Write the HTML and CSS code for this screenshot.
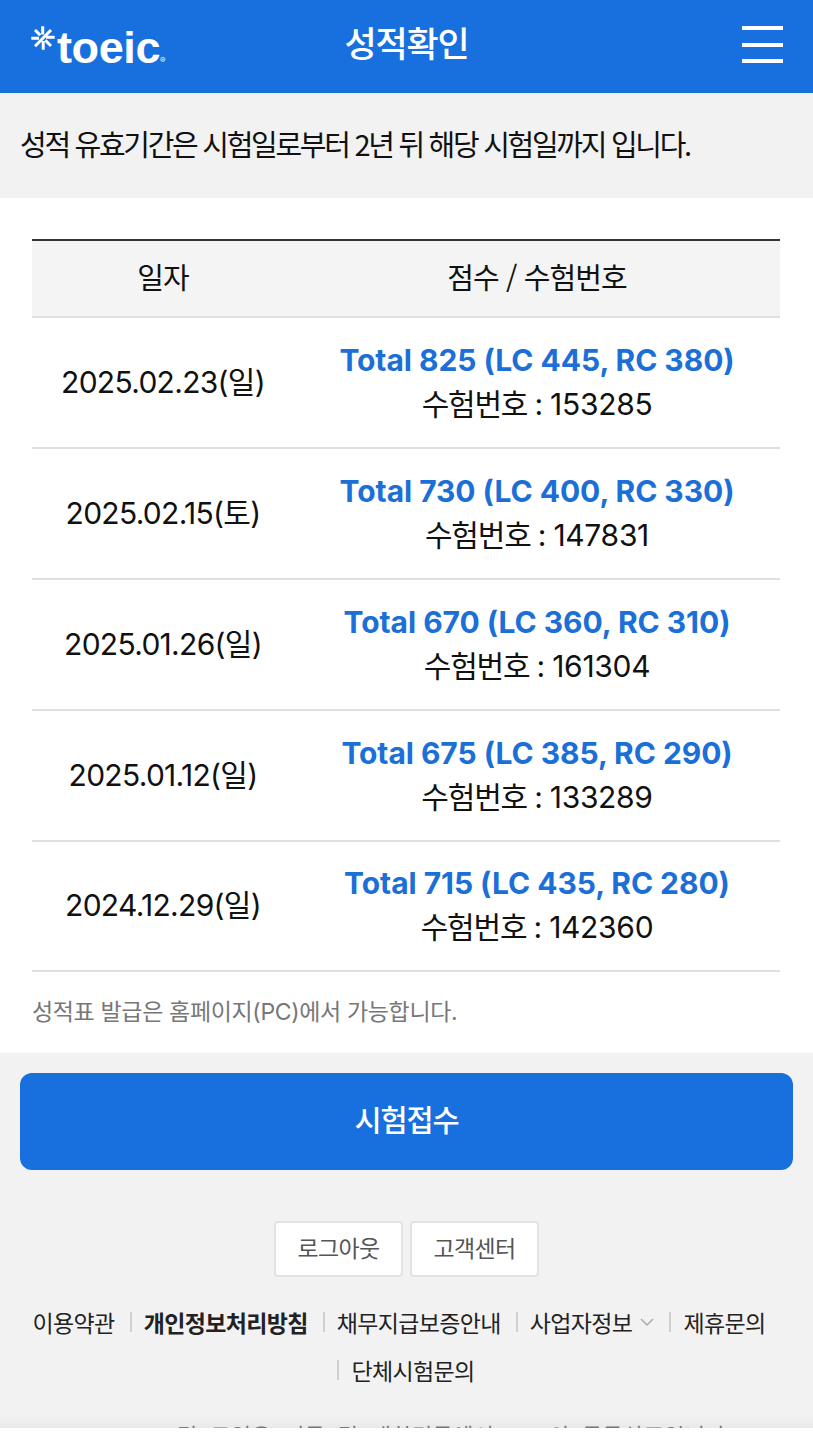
FILE: index.html
```html
<!DOCTYPE html>
<html lang="ko">
<head>
<meta charset="utf-8">
<title>성적확인</title>
<link rel="stylesheet" href="styles.css">
</head>
<body>
<div class="page">
  <header class="header">
    <div class="logo">
      <svg class="logo-star" viewBox="0 0 24 24" width="24" height="24"><path d="M11.7 0.3V8.5M0.3 12.3H8M12.2 15V23.7M15 11.2H23.7M4 4L9.3 9.3M4 20.3L20 4M14.3 14.3L20 20" fill="none" stroke="currentColor" stroke-width="3"/></svg>
      <span class="logo-text">toeic</span><span class="logo-mark">®</span>
    </div>
    <h1 class="title">성적확인</h1>
    <button class="menu" aria-label="메뉴"><i></i><i></i><i></i></button>
  </header>
  <p class="notice">성적 유효기간은 시험일로부터 2년 뒤 해당 시험일까지 입니다.</p>
  <main class="results">
    <table class="scores">
      <thead><tr><th class="col-date">일자</th><th>점수 / 수험번호</th></tr></thead>
      <tbody>
        <tr><td class="date">2025.02.23(일)</td><td><strong>Total 825 (LC 445, RC 380)</strong><div><span class="label">수험번호 :</span> 153285</div></td></tr>
        <tr><td class="date">2025.02.15(토)</td><td><strong>Total 730 (LC 400, RC 330)</strong><div><span class="label">수험번호 :</span> 147831</div></td></tr>
        <tr><td class="date">2025.01.26(일)</td><td><strong>Total 670 (LC 360, RC 310)</strong><div><span class="label">수험번호 :</span> 161304</div></td></tr>
        <tr><td class="date">2025.01.12(일)</td><td><strong>Total 675 (LC 385, RC 290)</strong><div><span class="label">수험번호 :</span> 133289</div></td></tr>
        <tr><td class="date">2024.12.29(일)</td><td><strong>Total 715 (LC 435, RC 280)</strong><div><span class="label">수험번호 :</span> 142360</div></td></tr>
      </tbody>
    </table>
    <p class="hint">성적표 발급은 홈페이지(PC)에서 가능합니다.</p>
  </main>
  <footer class="footer">
    <a class="apply">시험접수</a>
    <div class="actions"><a class="action">로그아웃</a><a class="action">고객센터</a></div>
    <nav class="links">
      <a class="link">이용약관</a>
      <a class="link bold">개인정보처리방침</a>
      <a class="link">채무지급보증안내</a>
      <a class="link">사업자정보<svg class="chevron" viewBox="0 0 14 9" width="14" height="9"><path d="M1 1L7 7L13 1" fill="none" stroke="currentColor" stroke-width="1.5"/></svg></a>
      <a class="link">제휴문의</a>
    </nav>
    <nav class="links second"><a class="link divided">단체시험문의</a></nav>
    <p class="company">ETS, TOEIC 및 토익은 미국 및 대한민국에서 ETS의 등록상표입니다.</p>
  </footer>
</div>
</body>
</html>
```
FILE: styles.css
```css
* { box-sizing: border-box; }
body {
  margin: 0;
  background: #fff;
  color: #111;
  font-family: Inter, "Noto Sans CJK KR", sans-serif;
  font-size: 30px;
}
p, h1 { margin: 0; }
.page { width: 813px; height: 1440px; overflow: hidden; }
.header {
  display: grid;
  grid-template-columns: 1fr auto 1fr;
  align-items: center;
  height: 93px;
  padding: 0 30px;
  background: #1870df;
  color: #fff;
}
.logo { display: flex; align-items: flex-start; height: 48px; }
.logo-star { margin: 3px 0 0 1px; }
.logo-text {
  margin-left: 2px;
  font-family: "Liberation Sans", sans-serif;
  font-size: 45px;
  font-weight: 700;
  line-height: 49px;
  letter-spacing: -0.4px;
}
.logo-mark { margin: 32px 0 0; font-size: 8px; line-height: 10px; }
.title {
  padding-bottom: 9px;
  font-family: "Noto Sans CJK KR", sans-serif;
  font-size: 35px;
  font-weight: 500;
  line-height: 48px;
  letter-spacing: -1.2px;
}
.menu {
  display: flex;
  flex-direction: column;
  justify-content: space-between;
  justify-self: end;
  width: 41px;
  height: 37px;
  margin-bottom: 4px;
  padding: 0;
  border: 0;
  background: none;
}
.menu i { height: 4px; background: #fff; }
.notice {
  height: 105px;
  padding-left: 20px;
  background: #f2f2f2;
  font-family: "Noto Sans CJK KR", sans-serif;
  font-size: 29px;
  line-height: 101px;
  letter-spacing: -2.3px;
  white-space: nowrap;
}
.results { height: 855px; padding: 41px 33px 0 32px; }
.scores { width: 100%; border-collapse: separate; border-spacing: 0; table-layout: fixed; text-align: center; }
.col-date { width: 262px; }
th {
  height: 79.4px;
  padding: 0 0 5px;
  border-top: 2px solid #333;
  border-bottom: 2px solid #e0e0e0;
  background: #f4f4f4;
  font-family: "Noto Sans CJK KR", sans-serif;
  font-size: 29px;
  font-weight: 400;
  letter-spacing: -0.9px;
}
td { height: 130.8px; padding: 0 0 1px; border-bottom: 2px solid #e0e0e0; line-height: 44px; white-space: nowrap; letter-spacing: -0.3px; }
.date { letter-spacing: -0.7px; }
td strong { display: block; color: #1c6fd6; font-weight: 700; letter-spacing: -0.05px; }
.label { letter-spacing: -1.2px; }
.hint { margin-top: 17px; color: #777; font-size: 23px; line-height: 46px; letter-spacing: -0.35px; }
.footer { height: 375px; padding: 20px 20px 0; background: linear-gradient(#f2f2f2 362px, #e9e9eb); overflow: hidden; }
.apply {
  display: block;
  height: 97px;
  border-radius: 12px;
  background: #1870df;
  color: #fff;
  font-family: "Noto Sans CJK KR", sans-serif;
  font-size: 29.5px;
  font-weight: 500;
  line-height: 91px;
  letter-spacing: -1.2px;
  text-align: center;
}
.actions { display: flex; justify-content: center; gap: 7px; margin-top: 51px; }
.action {
  width: 129px;
  height: 56px;
  border: 2px solid #e2e2e2;
  border-radius: 4px;
  background: #fff;
  color: #555;
  font-family: "Noto Sans CJK KR", sans-serif;
  font-size: 23px;
  line-height: 48px;
  letter-spacing: -0.6px;
  text-align: center;
}
.links {
  display: flex;
  justify-content: center;
  margin-top: 28px;
  padding-right: 15px;
  color: #222;
  font-family: "Noto Sans CJK KR", sans-serif;
  font-size: 23px;
  line-height: 34px;
  letter-spacing: -0.65px;
  white-space: nowrap;
}
.second { margin-top: 14px; padding-right: 1px; }
.link { display: flex; align-items: center; }
.link + .link::before, .divided::before { content: ""; width: 2px; height: 20px; margin: 0 12px 0 15px; background: #d0d0d0; }
.divided::before { margin-left: 0; }
.bold { font-weight: 700; }
.chevron { margin: 0 0 0 8px; color: #aaa; }
.company { margin-top: 34px; padding-left: 16px; color: #777; font-size: 22px; line-height: 30px; letter-spacing: 0.3px; word-spacing: 6px; white-space: nowrap; }
```
